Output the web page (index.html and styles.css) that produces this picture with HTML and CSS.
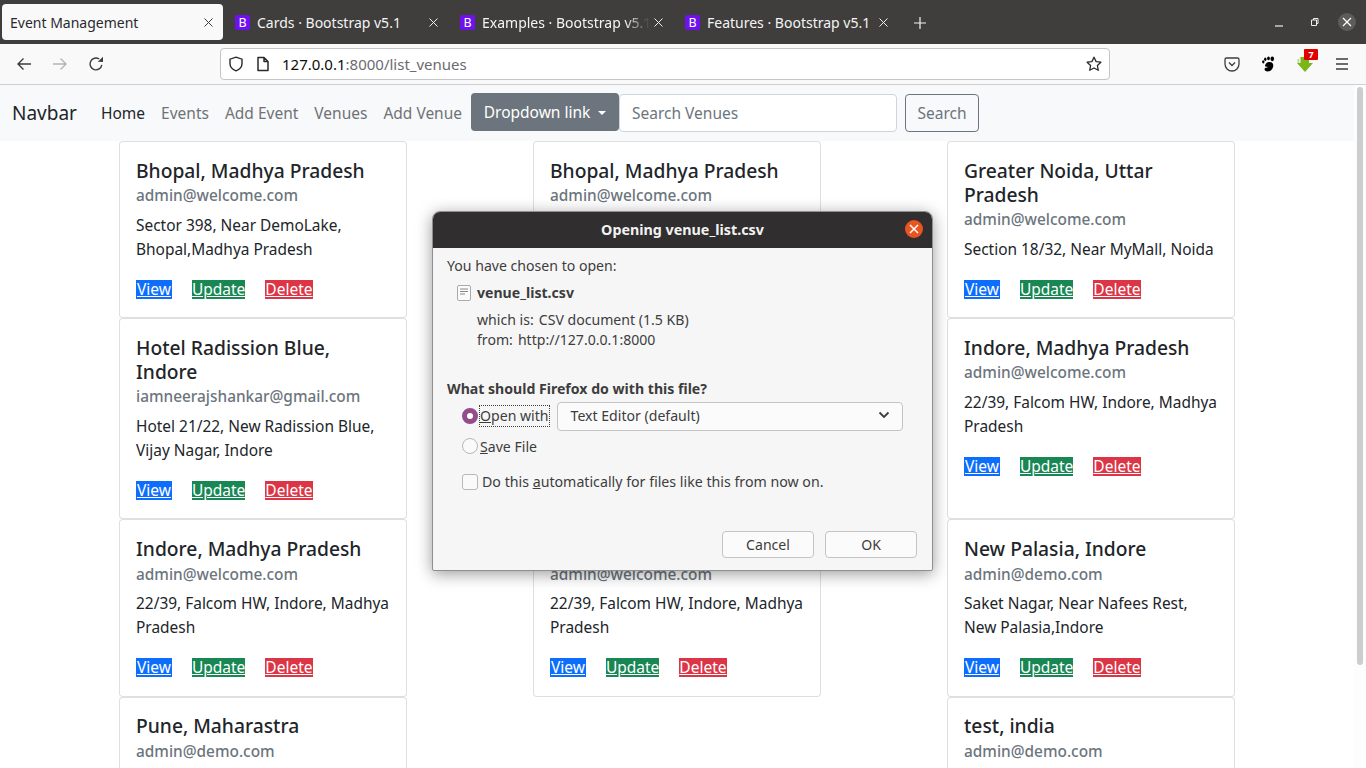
FILE: index.html
```html
<!DOCTYPE html>
<html lang="en">
<head>
    <meta charset="UTF-8">
    <meta name="viewport" content="width=device-width, initial-scale=1.0">
    <title>Event Management</title>
    <link rel="stylesheet" href="styles.css">
</head>
<body>
    <!-- browser tabs -->
    <div class="tabbar">
        <div class="tab tab-active">
            <span class="tab-title">Event Management</span>
            <svg class="tab-x" width="9" height="9" viewBox="0 0 9 9"><path d="M.5.5l8 8M8.500.5l-8 8" stroke="#3d3d40"/></svg>
        </div>
        <div class="tab">
            <span class="favicon">B</span><span class="tab-title">Cards · Bootstrap v5.1</span>
            <svg class="tab-x" width="9" height="9" viewBox="0 0 9 9"><path d="M.5.5l8 8M8.500.5l-8 8" stroke="#eee"/></svg>
        </div>
        <div class="tab">
            <span class="favicon">B</span><span class="tab-title tab-fade">Examples · Bootstrap v5.1</span>
            <svg class="tab-x" width="9" height="9" viewBox="0 0 9 9"><path d="M.5.5l8 8M8.500.5l-8 8" stroke="#eee"/></svg>
        </div>
        <div class="tab">
            <span class="favicon">B</span><span class="tab-title">Features · Bootstrap v5.1</span>
            <svg class="tab-x" width="9" height="9" viewBox="0 0 9 9"><path d="M.5.5l8 8M8.500.5l-8 8" stroke="#eee"/></svg>
        </div>
        <svg class="new-tab" width="14" height="14" viewBox="0 0 14 14"><path d="M7 1v12M1 7h12" stroke="#f4f4f4" stroke-width="1.2"/></svg>
        <div class="win-controls">
            <svg class="win-min" width="10" height="10" viewBox="0 0 10 10"><path d="M1 9h8" stroke="#eee" stroke-width="1.2"/></svg>
            <svg class="win-max" width="10" height="10" viewBox="0 0 10 10"><path d="M2.500 3h5v5.500h-5zM4.500 3V1.500H9v5H7.500" fill="none" stroke="#eee"/></svg>
            <span class="win-close"><svg width="10" height="10" viewBox="0 0 10 10"><path d="M1 1l8 8M9 1l-8 8" stroke="#fff" stroke-width="1.200"/></svg></span>
        </div>
    </div>

    <!-- browser toolbar -->
    <div class="toolbar">
        <svg class="tool-icon" width="16" height="16" viewBox="0 0 16 16"><path d="M15 8H2M7.500 2.500L2 8l5.500 5.500" fill="none" stroke="#3d3d40" stroke-width="1.400"/></svg>
        <svg class="tool-icon" width="16" height="16" viewBox="0 0 16 16"><path d="M1 8h13M8.500 2.500L14 8l-5.500 5.500" fill="none" stroke="#b4b4b6" stroke-width="1.400"/></svg>
        <svg class="tool-icon" width="16" height="16" viewBox="0 0 16 16"><path d="M13.800 8.800A5.900 5.900 0 1 1 11.200 3" fill="none" stroke="#3d3d40" stroke-width="1.400"/><path d="M9.800 5.800L15 6V.8z" fill="#3d3d40"/></svg>
        <div class="urlbar">
            <svg width="16" height="16" viewBox="0 0 16 16"><path d="M8 1.200l6 2v4.500c0 3.500-2.600 5.800-6 7.100-3.400-1.300-6-3.600-6-7.100V3.200z" fill="none" stroke="#2a2a2e" stroke-width="1.400"/></svg>
            <svg width="14" height="16" viewBox="0 0 14 16"><path d="M2 1.500h6l4 4v9H2zM8 1.500v4h4" fill="none" stroke="#2a2a2e" stroke-width="1.500" stroke-linejoin="round"/></svg>
            <span class="url"><b>127.0.0.1</b>:8000/list_venues</span>
            <svg class="star" width="16" height="16" viewBox="0 0 16 16"><path d="M8 1.200l2.100 4.400 4.800.6-3.500 3.300.9 4.800L8 12l-4.300 2.300.9-4.800L1.100 6.200l4.800-.6z" fill="none" stroke="#2a2a2e" stroke-width="1.300" stroke-linejoin="round"/></svg>
        </div>
        <div class="tool-right">
            <svg width="16" height="16" viewBox="0 0 16 16"><path d="M2.500 2h11A1.500 1.500 0 0 1 15 3.500V8A7 7 0 0 1 1 8V3.500A1.500 1.500 0 0 1 2.500 2z" fill="none" stroke="#3d3d40" stroke-width="1.300"/><path d="M5 6.500L8 9.500l3-3" fill="none" stroke="#3d3d40" stroke-width="1.300"/></svg>
            <svg width="16" height="16" viewBox="0 0 16 16"><path d="M8.500 6c2.800-.6 5 1.200 4.800 3.800-.2 3-2.600 5.700-5.800 5.700-1.800 0-3-1-3-2.200 0-1 1-1.500 2.400-1.700l1.400-.5-3-.6C4.400 9.600 6 6.600 8.500 6z"/><ellipse cx="3.300" cy="5.800" rx="1.200" ry="1.600"/><ellipse cx="5.300" cy="3.300" rx="1.200" ry="1.700"/><ellipse cx="8.500" cy="2.300" rx="1.400" ry="1.900"/><ellipse cx="12.300" cy="2.800" rx="1.800" ry="2.400"/></svg>
            <span class="dl-icon">
                <svg width="18" height="20" viewBox="0 0 18 20"><path d="M5 3h8v6h4l-8 9-8-9h4z" fill="#7cb518"/><path d="M1.500 5h1.500v4H1.500zM3.800 3h1.200v6H3.800z" fill="#b9d98a"/></svg>
                <span class="dl-badge">7</span>
            </span>
            <svg width="16" height="16" viewBox="0 0 16 16"><path d="M2 3h12M2 8h12M2 13h12" stroke="#3d3d40" stroke-width="1.300"/></svg>
        </div>
    </div>

    <!-- page -->
    <div class="viewport">
        <nav class="navbar">
            <a class="brand">Navbar</a>
            <a class="nav-link nav-current">Home</a>
            <a class="nav-link">Events</a>
            <a class="nav-link">Add Event</a>
            <a class="nav-link">Venues</a>
            <a class="nav-link">Add Venue</a>
            <button class="dropdown-btn">Dropdown link <span class="caret"></span></button>
            <input class="search-input" type="text" placeholder="Search Venues">
            <button class="search-btn">Search</button>
        </nav>

        <div class="venues">
            <div class="card">
                <h5>Bhopal, Madhya Pradesh</h5>
                <h6>admin@welcome.com</h6>
                <p>Sector 398, Near DemoLake, Bhopal,Madhya Pradesh</p>
                <div class="card-links"><a class="view">View</a><a class="update">Update</a><a class="delete">Delete</a></div>
            </div>
            <!-- rest of this card sits behind the dialog -->
            <div class="card">
                <h5>Bhopal, Madhya Pradesh</h5>
                <h6>admin@welcome.com</h6>
            </div>
            <div class="card">
                <h5>Greater Noida, Uttar Pradesh</h5>
                <h6>admin@welcome.com</h6>
                <p>Section 18/32, Near MyMall, Noida</p>
                <div class="card-links"><a class="view">View</a><a class="update">Update</a><a class="delete">Delete</a></div>
            </div>

            <div class="card">
                <h5>Hotel Radission Blue, Indore</h5>
                <h6>iamneerajshankar@gmail.com</h6>
                <p>Hotel 21/22, New Radission Blue, Vijay Nagar, Indore</p>
                <div class="card-links"><a class="view">View</a><a class="update">Update</a><a class="delete">Delete</a></div>
            </div>
            <div class="card"></div>
            <div class="card">
                <h5>Indore, Madhya Pradesh</h5>
                <h6>admin@welcome.com</h6>
                <p>22/39, Falcom HW, Indore, Madhya Pradesh</p>
                <div class="card-links"><a class="view">View</a><a class="update">Update</a><a class="delete">Delete</a></div>
            </div>

            <div class="card">
                <h5>Indore, Madhya Pradesh</h5>
                <h6>admin@welcome.com</h6>
                <p>22/39, Falcom HW, Indore, Madhya Pradesh</p>
                <div class="card-links"><a class="view">View</a><a class="update">Update</a><a class="delete">Delete</a></div>
            </div>
            <div class="card">
                <h5>&nbsp;</h5>
                <h6>admin@welcome.com</h6>
                <p>22/39, Falcom HW, Indore, Madhya Pradesh</p>
                <div class="card-links"><a class="view">View</a><a class="update">Update</a><a class="delete">Delete</a></div>
            </div>
            <div class="card">
                <h5>New Palasia, Indore</h5>
                <h6>admin@demo.com</h6>
                <p>Saket Nagar, Near Nafees Rest, New Palasia,Indore</p>
                <div class="card-links"><a class="view">View</a><a class="update">Update</a><a class="delete">Delete</a></div>
            </div>

            <div class="card">
                <h5>Pune, Maharastra</h5>
                <h6>admin@demo.com</h6>
            </div>
            <div></div>
            <div class="card">
                <h5>test, india</h5>
                <h6>admin@demo.com</h6>
            </div>
        </div>

        <div class="scrollbar"><div class="scroll-thumb"></div></div>

        <!-- file dialog -->
        <div class="dialog">
            <div class="dialog-title">
                <span>Opening venue_list.csv</span>
                <span class="dialog-close"><svg width="10" height="10" viewBox="0 0 10 10"><path d="M1 1l8 8M9 1l-8 8" stroke="#fff" stroke-width="1.500"/></svg></span>
            </div>
            <div class="dialog-body">
                <div class="chosen">You have chosen to open:</div>
                <div class="file-row">
                    <svg width="14" height="16" viewBox="0 0 14 16"><rect x=".5" y=".5" width="13" height="15" rx="1.500" fill="#fbfbfb" stroke="#a9a9a9"/><path d="M3 4h8M3 6.500h8M3 9h5" stroke="#8a8a8a"/></svg>
                    <b>venue_list.csv</b>
                </div>
                <div class="file-info">
                    <div><span class="info-label">which is:</span>CSV document (1.5 KB)</div>
                    <div><span class="info-label">from:</span>http://127.0.0.1:8000</div>
                </div>
                <div class="question">What should Firefox do with this file?</div>
                <div class="choice choice-open">
                    <span class="radio radio-on"></span>
                    <span class="focus-label"><u>O</u>pen with</span>
                    <div class="app-select">Text Editor (default)
                        <svg width="12" height="8" viewBox="0 0 12 8"><path d="M1.500 1.500L6 6l4.500-4.500" fill="none" stroke="#3d3d3d" stroke-width="1.800"/></svg>
                    </div>
                </div>
                <div class="choice choice-save">
                    <span class="radio"></span>
                    <span class="plain-label"><u>S</u>ave File</span>
                </div>
                <div class="auto-row">
                    <span class="check"></span>
                    <span>Do this <u>a</u>utomatically for files like this from now on.</span>
                </div>
                <div class="dialog-actions">
                    <button class="dlg-btn">Cancel</button>
                    <button class="dlg-btn">OK</button>
                </div>
            </div>
        </div>
    </div>
</body>
</html>
```

FILE: styles.css
```css
* {
    box-sizing: border-box;
}
html, body {
    margin: 0;
    height: 768px;
    overflow: hidden;
}
body {
    font-family: "Noto Sans", "Open Sans", sans-serif;
    background-color: #fff;
    color: #212529;
}

/* tabs */
.tabbar {
    height: 44px;
    background-color: #3f3e3c;
    display: flex;
    align-items: flex-start;
    padding: 4px 0 0 2px;
}
.tab {
    width: 221px;
    height: 36px;
    margin-right: 4px;
    display: flex;
    align-items: center;
    padding: 0 10px 0 8px;
    color: #f4f4f4;
    font-size: 14px;
    white-space: nowrap;
}
.tab-active {
    background-color: #f9f9fa;
    color: #2a2a2e;
    border-radius: 4px;
}
.tab-title {
    flex: 1;
    overflow: hidden;
}
.tab-fade {
    -webkit-mask-image: linear-gradient(to right, #000 85%, transparent);
    mask-image: linear-gradient(to right, #000 85%, transparent);
}
.tab-x {
    margin-left: 4px;
    flex: none;
}
.favicon {
    width: 15px;
    height: 15px;
    background-color: #7010f0;
    color: #fff;
    border-radius: 2px;
    font-size: 12.500px;
    line-height: 15px;
    text-align: center;
    margin-right: 7px;
    flex: none;
}
.new-tab {
    margin: 12px 0 0 11px;
}
.win-controls {
    margin-left: auto;
    display: flex;
    align-items: center;
    padding: 9px 10px 0 0;
}
.win-max {
    margin: 0 19px 0 25px;
}
.win-close {
    width: 18px;
    height: 18px;
    border-radius: 50%;
    background-color: #5d5c5a;
    display: flex;
    align-items: center;
    justify-content: center;
}

/* toolbar */
.toolbar {
    height: 41px;
    background-color: #f9f9fa;
    border-bottom: 1px solid #cfcfd1;
    display: flex;
    align-items: center;
    padding-left: 16px;
}
.tool-icon {
    margin-right: 20px;
}
.urlbar {
    width: 890px;
    height: 32px;
    margin-left: 96px;
    background-color: #fff;
    border: 1px solid #c4c4c6;
    border-radius: 4px;
    display: flex;
    align-items: center;
    padding: 0 7px;
    gap: 12px;
}
.url {
    font-size: 15px;
    color: #6b6b6f;
}
.url b {
    font-weight: 400;
    color: #0c0c0d;
}
.star {
    margin-left: auto;
}
.tool-right {
    margin-left: auto;
    display: flex;
    align-items: center;
    gap: 20px;
    padding-right: 16px;
}
.dl-icon {
    position: relative;
    width: 18px;
    height: 20px;
}
.dl-badge {
    position: absolute;
    top: -5px;
    right: -4px;
    background-color: #e00000;
    color: #fff;
    font-size: 9px;
    font-weight: 700;
    line-height: 11px;
    width: 14px;
    text-align: center;
    border-radius: 1px;
}

/* page */
.viewport {
    position: relative;
    height: 683px;
    overflow: hidden;
}
.navbar {
    height: 56px;
    background-color: #f8f9fa;
    display: flex;
    align-items: center;
    padding-left: 12px;
    font-size: 15.500px;
}
.brand {
    font-size: 19px;
    color: #212529;
    margin-right: 16px;
}
.nav-link {
    color: #6f7276;
    padding: 0 8px;
}
.nav-current {
    color: #212529;
}
.dropdown-btn {
    font: inherit;
    height: 38px;
    width: 148px;
    margin: 0 0 2px 1px;
    background-color: #6c757d;
    color: #fff;
    border: 0;
    border-radius: 4px;
    text-align: center;
}
.caret {
    display: inline-block;
    margin-left: 4px;
    vertical-align: 3px;
    border-top: 4.500px solid #fff;
    border-left: 4.500px solid transparent;
    border-right: 4.500px solid transparent;
}
.search-input {
    width: 278px;
    height: 38px;
    padding: 6px 12px;
    border: 1px solid #ced4da;
    border-radius: 4px;
    font: inherit;
}
.search-input::placeholder {
    color: #6c757d;
}
.search-btn {
    font: inherit;
    height: 38px;
    width: 74px;
    margin-left: 8px;
    color: #6c757d;
    background: transparent;
    border: 1px solid #6c757d;
    border-radius: 4px;
}
.venues {
    display: grid;
    grid-template-columns: repeat(3, 288px);
    column-gap: 126px;
    padding-left: 119px;
}
.card {
    background-color: #fff;
    border: 1px solid rgba(0, 0, 0, 0.125);
    border-radius: 4px;
    padding: 16.800px 16px 18.200px;
}
.card h5 {
    margin: 0 0 3.400px;
    font-size: 19.250px;
    line-height: 24px;
    font-weight: 500;
}
.card h6 {
    margin: 0 0 7.600px;
    font-size: 15.400px;
    line-height: 19.200px;
    font-weight: 500;
    color: #6c757d;
}
.card p {
    margin: 0 0 19px;
    font-size: 15.450px;
    line-height: 24px;
}
.card-links {
    display: flex;
    gap: 20px;
    font-size: 15.500px;
    line-height: 19px;
    color: #fff;
}
.card-links a {
    text-decoration: underline;
}
.view {
    background-color: #0d6efd;
    padding: 0 1px;
}
.update {
    background-color: #198754;
}
.delete {
    background-color: #dc3545;
}
.scrollbar {
    position: absolute;
    top: 0;
    right: 0;
    bottom: 0;
    width: 12px;
    background-color: #fdfdfd;
}
.scroll-thumb {
    width: 6px;
    height: 578px;
    margin: 2px 0 0 3px;
    background-color: #cdcdcd;
    border-radius: 3px;
}

/* dialog */
.dialog {
    position: absolute;
    left: 432px;
    top: 126px;
    width: 501px;
    height: 360px;
    background-color: #f6f6f6;
    border: 1px solid #8f8f8f;
    border-radius: 8px 8px 2px 2px;
    box-shadow: 0 3px 16px rgba(0, 0, 0, 0.4);
    color: #3d3d3d;
    font-size: 14.100px;
    overflow: hidden;
}
.dialog-title {
    height: 36px;
    padding-bottom: 2px;
    background-color: #302e2e;
    color: #f2f2f2;
    font-weight: 700;
    font-size: 14.300px;
    display: flex;
    align-items: center;
    justify-content: center;
    position: relative;
}
.dialog-close {
    position: absolute;
    right: 9px;
    top: 8px;
    width: 18px;
    height: 18px;
    border-radius: 50%;
    background-color: #e95420;
    display: flex;
    align-items: center;
    justify-content: center;
}
.dialog-body {
    padding: 9px 15px 9px 14px;
    display: flex;
    flex-direction: column;
}
.chosen {
    line-height: 18px;
}
.file-row {
    display: flex;
    align-items: center;
    gap: 6px;
    margin: 9px 0 0 10px;
    line-height: 18px;
}
.file-info {
    margin: 8px 0 0 30px;
    line-height: 20px;
}
.info-label {
    margin-right: 5px;
}
.question {
    margin-top: 30px;
    font-weight: 700;
    line-height: 18px;
}
.choice {
    display: flex;
    align-items: center;
    margin-left: 15px;
}
.choice-open {
    margin-top: 4px;
    height: 28px;
}
.choice-save {
    margin-top: 2px;
    height: 28px;
}
.radio {
    width: 16px;
    height: 16px;
    border-radius: 50%;
    border: 1px solid #b8b8b8;
    background-color: #fafafa;
    flex: none;
}
.radio-on {
    border: 5px solid #924d8b;
    background-color: #fff;
}
.focus-label {
    outline: 1px dotted #3d3d3d;
    margin-left: 2px;
    line-height: 20px;
}
.plain-label {
    margin-left: 2px;
}
.app-select {
    margin-left: 8px;
    width: 346px;
    height: 29px;
    background-color: #fbfbfb;
    border: 1px solid #c4c4c4;
    border-radius: 4px;
    display: flex;
    align-items: center;
    justify-content: space-between;
    padding: 0 12px 2px 13px;
}
.auto-row {
    display: flex;
    align-items: center;
    gap: 4px;
    margin: 12px 0 0 15px;
    font-size: 14.200px;
}
.check {
    width: 16px;
    height: 16px;
    border: 1px solid #b8b8b8;
    border-radius: 3px;
    background-color: #fafafa;
}
.dialog-actions {
    display: flex;
    justify-content: flex-end;
    gap: 11px;
    margin-top: 40px;
}
.dlg-btn {
    font: inherit;
    color: #3d3d3d;
    width: 92px;
    height: 27px;
    background-color: #fbfbfb;
    border: 1px solid #c4c4c4;
    border-radius: 4px;
}
```
